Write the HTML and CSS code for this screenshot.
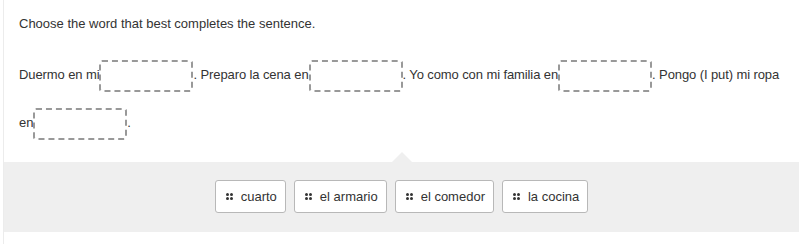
FILE: index.html
```html
<!DOCTYPE html>
<html lang="es">
<head>
    <meta charset="UTF-8">
    <title>Choose the word</title>
    <link rel="stylesheet" href="styles.css">
</head>
<body>

    <div class="question">
        <div class="prompt">Choose the word that best completes the sentence.</div>

        <!-- sentence with drop targets -->
        <div class="sentence">Duermo en mi<span class="blank"></span>. Preparo la cena en<span class="blank"></span>. Yo como con mi familia en<span class="blank"></span>. Pongo (I put) mi ropa en<span class="blank"></span>.</div>

        <!-- word bank -->
        <div class="tray">
            <div class="chip"><svg class="grip" width="7" height="7" viewBox="0 0 7 7"><circle cx="1.5" cy="1.5" r="1.5"/><circle cx="5.5" cy="1.5" r="1.5"/><circle cx="1.5" cy="5.5" r="1.5"/><circle cx="5.5" cy="5.5" r="1.5"/></svg>cuarto</div>
            <div class="chip"><svg class="grip" width="7" height="7" viewBox="0 0 7 7"><circle cx="1.5" cy="1.5" r="1.5"/><circle cx="5.5" cy="1.5" r="1.5"/><circle cx="1.5" cy="5.5" r="1.5"/><circle cx="5.5" cy="5.5" r="1.5"/></svg>el armario</div>
            <div class="chip"><svg class="grip" width="7" height="7" viewBox="0 0 7 7"><circle cx="1.5" cy="1.5" r="1.5"/><circle cx="5.5" cy="1.5" r="1.5"/><circle cx="1.5" cy="5.5" r="1.5"/><circle cx="5.5" cy="5.5" r="1.5"/></svg>el comedor</div>
            <div class="chip"><svg class="grip" width="7" height="7" viewBox="0 0 7 7"><circle cx="1.5" cy="1.5" r="1.5"/><circle cx="5.5" cy="1.5" r="1.5"/><circle cx="1.5" cy="5.5" r="1.5"/><circle cx="5.5" cy="5.5" r="1.5"/></svg>la cocina</div>
        </div>
    </div>

</body>
</html>
```

FILE: styles.css
```css
body {
    margin: 0;
    font-family: "Liberation Sans", Arial, sans-serif;
    font-size: 13px;
    color: #333;
    background-color: #fff;
}
.question {
    margin-left: 3px;
    width: 795px;
    border-left: 1px solid #ececec;
    padding-bottom: 13px;
}
.prompt {
    padding: 16px 15px 0;
    line-height: 15px;
}
.sentence {
    padding: 20px 8px 0 15px;
    line-height: 48px;
    letter-spacing: -0.1px;
}
.blank {
    display: inline-block;
    width: 94px;
    height: 32px;
    box-sizing: border-box;
    border: 2px dashed #999;
    border-radius: 3px;
    vertical-align: middle;
}
.tray {
    position: relative;
    margin-top: 15px;
    padding: 18px 0 19px;
    background-color: #efefef;
    display: flex;
    justify-content: center;
    gap: 8px;
}
.tray::before {
    content: "";
    position: absolute;
    top: -10px;
    left: 388px;
    border-left: 10px solid transparent;
    border-right: 10px solid transparent;
    border-bottom: 10px solid #efefef;
}
.chip {
    display: flex;
    align-items: center;
    gap: 8px;
    height: 33px;
    box-sizing: border-box;
    padding: 0 8px 0 10px;
    background-color: #fff;
    border: 1px solid #b8b8b8;
    border-radius: 3px;
}
.grip {
    fill: #333;
}
```
